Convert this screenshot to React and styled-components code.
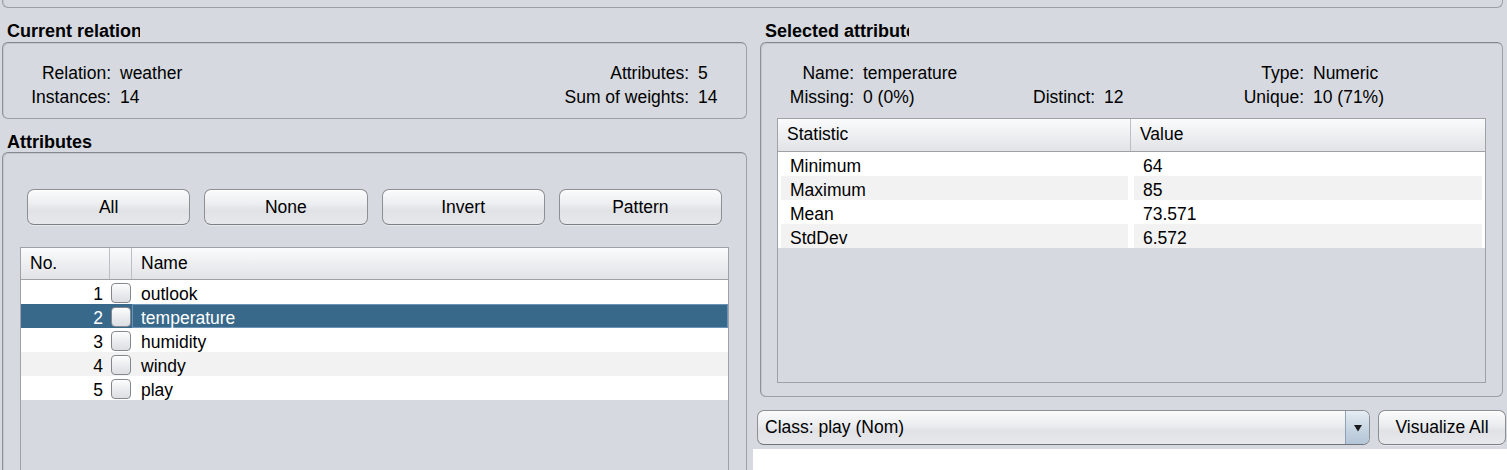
import React from "react";
import styled, { createGlobalStyle } from "styled-components";

const GlobalStyle = createGlobalStyle`
  html, body {
    margin: 0;
    padding: 0;
    background: #d6d9df;
  }
  body {
    font-family: "Liberation Sans", Arial, sans-serif;
    font-size: 17.5px;
    color: #000;
  }
`;

const attributes = [
  { no: 1, name: "outlook" },
  { no: 2, name: "temperature" },
  { no: 3, name: "humidity" },
  { no: 4, name: "windy" },
  { no: 5, name: "play" },
];

const stats = [
  ["Minimum", "64"],
  ["Maximum", "85"],
  ["Mean", "73.571"],
  ["StdDev", "6.572"],
];

const App = () => {
  return (
    <>
      <GlobalStyle />
      <Frame>
        <TopStrip />
        <Columns>
          <LeftCol>
            <SectionTitle $h={34}>
              <TitleText $clip={133}>Current relation</TitleText>
            </SectionTitle>
            <GroupBox $h={77}>
              <RelationGrid>
                <Label>Relation:</Label>
                <Value>weather</Value>
                <Label>Attributes:</Label>
                <Value>5</Value>
                <Label>Instances:</Label>
                <Value>14</Value>
                <Label>Sum of weights:</Label>
                <Value>14</Value>
              </RelationGrid>
            </GroupBox>
            <SectionTitle $h={33}>
              <TitleText>Attributes</TitleText>
            </SectionTitle>
            <GroupBox $grow>
              <ButtonRow>
                <Button>All</Button>
                <Button>None</Button>
                <Button>Invert</Button>
                <Button>Pattern</Button>
              </ButtonRow>
              <AttrTable>
                <AttrHeader>
                  <HeadCell>No.</HeadCell>
                  <HeadCell />
                  <HeadCell $last>Name</HeadCell>
                </AttrHeader>
                {attributes.map((a, i) => (
                  <AttrRow key={a.no} $selected={a.no === 2} $alt={i % 2 === 1}>
                    <NumCell>{a.no}</NumCell>
                    <CheckCell>
                      <CheckBox />
                    </CheckCell>
                    <NameCell $focus={a.no === 2}>{a.name}</NameCell>
                  </AttrRow>
                ))}
              </AttrTable>
            </GroupBox>
          </LeftCol>

          <RightCol>
            <RightTop>
              <SectionTitle $h={34}>
                <TitleText $clip={144}>Selected attribute</TitleText>
              </SectionTitle>
              <GroupBox $h={355} $pb={14}>
                <SummaryGrid>
                  <Label>Name:</Label>
                  <Value>temperature</Value>
                  <Label />
                  <Value />
                  <Label>Type:</Label>
                  <Value>Numeric</Value>
                  <Label>Missing:</Label>
                  <Value>0 (0%)</Value>
                  <Label>Distinct:</Label>
                  <Value>12</Value>
                  <Label>Unique:</Label>
                  <Value>10 (71%)</Value>
                </SummaryGrid>
                <StatTable>
                  <StatHeader>
                    <HeadCell>Statistic</HeadCell>
                    <HeadCell $last>Value</HeadCell>
                  </StatHeader>
                  {stats.map(([k, v], i) => (
                    <StatRow key={k}>
                      <StatCell $alt={i % 2 === 1}>{k}</StatCell>
                      <StatCell $alt={i % 2 === 1}>{v}</StatCell>
                    </StatRow>
                  ))}
                </StatTable>
              </GroupBox>
            </RightTop>
            <ClassRow>
              <Combo>
                <ComboText>Class: play (Nom)</ComboText>
                <ComboArrow>
                  <svg width="10" height="8" viewBox="0 0 10 8">
                    <polygon points="1,1 9,1 5,7.5" fill="#1a1a1a" />
                  </svg>
                </ComboArrow>
              </Combo>
              <VisButton>Visualize All</VisButton>
            </ClassRow>
            <PlotArea />
          </RightCol>
        </Columns>
      </Frame>
    </>
  );
};
export default App;

const Frame = styled.div`
  width: 1507px;
  height: 470px;
  overflow: hidden;
  display: flex;
  flex-direction: column;
  background: #d6d9df;
`;

const TopStrip = styled.div`
  flex: none;
  height: 8px;
  margin: 0 4px 0 2px;
  box-sizing: border-box;
  border: 1px solid #9c9fa4;
  border-top: none;
  border-radius: 0 0 6px 6px;
  box-shadow: inset 1px 0 0 #c3c6cb;
`;

const Columns = styled.div`
  flex: 1;
  min-height: 0;
  display: grid;
  grid-template-columns: 753px 1fr;
`;

const LeftCol = styled.div`
  display: flex;
  flex-direction: column;
  padding: 0 6px 0 2px;
  min-height: 0;
`;

const RightCol = styled.div`
  display: flex;
  flex-direction: column;
  min-height: 0;
`;

const RightTop = styled.div`
  display: flex;
  flex-direction: column;
  padding: 0 4px 0 7px;
`;

const SectionTitle = styled.div`
  flex: none;
  height: ${(p) => p.$h}px;
  box-sizing: border-box;
  padding: 13px 0 0 5px;
  line-height: 20px;
  font-size: 18px;
  font-weight: bold;
  white-space: nowrap;
`;

const TitleText = styled.span`
  display: inline-block;
  vertical-align: top;
  overflow: hidden;
  ${(p) => (p.$clip ? `max-width: ${p.$clip}px;` : "")}
`;

const GroupBox = styled.div`
  flex: ${(p) => (p.$grow ? "1" : "none")};
  ${(p) => (p.$h ? `height: ${p.$h}px;` : "")}
  ${(p) => (p.$grow ? "margin-bottom: -12px;" : "")}
  box-sizing: border-box;
  display: flex;
  flex-direction: column;
  padding-top: 17px;
  padding-bottom: ${(p) => p.$pb || 0}px;
  border: 1px solid #9c9fa4;
  border-top-color: #84878b;
  border-left-color: #8e9195;
  border-radius: 6px;
  box-shadow: inset 1px 1px 0 #c3c6cb;
  min-height: 0;
`;

const RelationGrid = styled.div`
  display: grid;
  grid-template-columns: 117px 1fr auto 48px;
  grid-auto-rows: 24px;
  line-height: 24px;
  padding-top: 1px;
  white-space: nowrap;
`;

const SummaryGrid = styled.div`
  display: grid;
  grid-template-columns: 102px 170px 71px 1fr auto 189px;
  grid-auto-rows: 24px;
  line-height: 24px;
  padding-top: 1px;
  margin-bottom: -1px;
  white-space: nowrap;
`;

const Label = styled.div`
  text-align: right;
  padding-right: 9px;
`;

const Value = styled.div`
  text-align: left;
`;

const ButtonRow = styled.div`
  display: grid;
  grid-template-columns: repeat(4, 1fr);
  gap: 14px;
  margin: 19px 24px 0 24px;
`;

const Button = styled.button`
  height: 36px;
  padding: 0;
  font: inherit;
  color: #000;
  border: 1px solid #8c8f93;
  border-bottom-color: #7c7f83;
  border-radius: 7px;
  background: linear-gradient(
    to bottom,
    #fbfbfc 0%,
    #eceef0 40%,
    #e0e2e6 60%,
    #e6e8eb 100%
  );
  box-shadow: inset 0 1px 0 #ffffff, 0 1px 0 #e8eaed;
`;

const AttrTable = styled.div`
  flex: 1;
  margin: 22px 17px 0 17px;
  border: 1px solid #9ea1a6;
  border-bottom: none;
  display: flex;
  flex-direction: column;
  background: #d6d9df;
`;

const AttrHeader = styled.div`
  display: grid;
  grid-template-columns: 89px 22px 1fr;
  height: 32px;
  box-sizing: border-box;
  border-bottom: 1px solid #9ea1a6;
  background: linear-gradient(to bottom, #fbfbfc 0%, #eef0f2 45%, #e1e3e7 100%);
`;

const HeadCell = styled.div`
  line-height: 31px;
  padding-left: 9px;
  border-right: ${(p) => (p.$last ? "none" : "1px solid #bcbfc4")};
  white-space: nowrap;
`;

const AttrRow = styled.div`
  display: grid;
  grid-template-columns: 89px 22px 1fr;
  height: 24px;
  background: ${(p) =>
    p.$selected ? "#39698a" : p.$alt ? "#f2f2f2" : "#ffffff"};
  color: ${(p) => (p.$selected ? "#ffffff" : "#000000")};
`;

const NumCell = styled.div`
  text-align: right;
  padding: 4px 7px 0 0;
  line-height: 20px;
`;

const CheckCell = styled.div`
  display: flex;
  justify-content: center;
  padding-top: 3px;
`;

const CheckBox = styled.div`
  width: 20px;
  height: 20px;
  box-sizing: border-box;
  border: 1px solid #84878c;
  border-radius: 4px;
  background: linear-gradient(to bottom, #fdfdfd 0%, #e9ebee 55%, #dcdfe3 100%);
  box-shadow: inset 0 1px 0 #ffffff;
`;

const NameCell = styled.div`
  padding: 4px 0 0 9px;
  line-height: 20px;
  box-shadow: ${(p) => (p.$focus ? "inset 0 0 0 1px #6a93b6" : "none")};
`;

const StatTable = styled.div`
  flex: none;
  height: 265px;
  margin: 10px 16px 0 16px;
  box-sizing: border-box;
  border: 1px solid #9ea1a6;
  background: #d6d9df;
`;

const StatHeader = styled.div`
  display: grid;
  grid-template-columns: 353px 1fr;
  height: 33px;
  box-sizing: border-box;
  border-bottom: 1px solid #9ea1a6;
  background: linear-gradient(to bottom, #fbfbfc 0%, #eef0f2 45%, #e1e3e7 100%);
`;

const StatRow = styled.div`
  display: grid;
  grid-template-columns: 353px 1fr;
  height: 24px;
  background: #ffffff;
`;

const StatCell = styled.div`
  margin: 0 3px;
  padding: 4px 0 0 9px;
  line-height: 20px;
  background: ${(p) => (p.$alt ? "#f2f2f2" : "transparent")};
`;

const ClassRow = styled.div`
  flex: none;
  display: flex;
  gap: 8px;
  height: 35px;
  margin-top: 13px;
  padding: 0 1px 0 4px;
`;

const Combo = styled.div`
  flex: 1;
  display: flex;
  box-sizing: border-box;
  border: 1px solid #8c8f93;
  border-bottom-color: #6f7276;
  border-radius: 7px;
  overflow: hidden;
  background: linear-gradient(to bottom, #fbfbfc 0%, #eceef0 40%, #e0e2e6 60%, #e6e8eb 100%);
`;

const ComboText = styled.div`
  flex: 1;
  padding-left: 7px;
  line-height: 33px;
  white-space: nowrap;
`;

const ComboArrow = styled.div`
  width: 23px;
  display: flex;
  align-items: center;
  justify-content: center;
  border-left: 1px solid #8ea2b6;
  background: linear-gradient(to bottom, #e6edf4 0%, #c9d6e3 50%, #b3c5d7 100%);
`;

const VisButton = styled(Button)`
  width: 128px;
  height: 35px;
  flex: none;
`;

const PlotArea = styled.div`
  flex: 1;
  margin-top: 4px;
  background: #ffffff;
`;
